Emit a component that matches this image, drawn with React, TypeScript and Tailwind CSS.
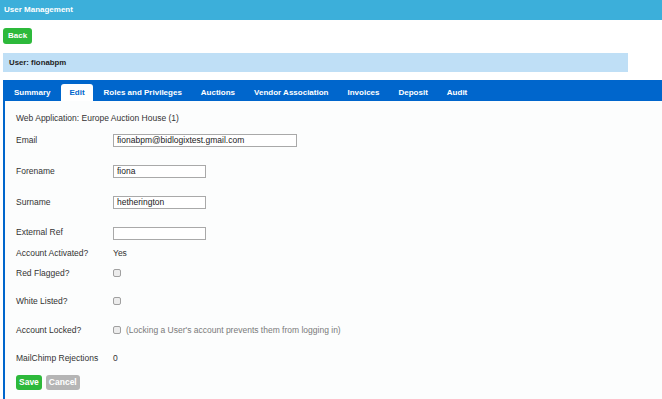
import React from 'react';

const tabs = ['Summary', 'Edit', 'Roles and Privileges', 'Auctions', 'Vendor Association', 'Invoices', 'Deposit', 'Audit'];

function Row({ label, children, mt }: { label: string; children?: React.ReactNode; mt: string }) {
  return (
    <div className={`flex items-center h-[20px] ${mt}`}>
      <div className="w-[97px] shrink-0 whitespace-nowrap">{label}</div>
      <div className="flex items-center">{children}</div>
    </div>
  );
}

function Checkbox() {
  return <span className="inline-block w-[8px] h-[8px] border border-[#a0a0a0] rounded-[2px] bg-[#ececec]" />;
}

const inputCls = 'h-[13px] border border-[#a9a9a9] bg-white px-[3px] text-[8.5px] text-[#222] outline-none';

export default function App() {
  return (
    <div className="w-[662px] h-[399px] overflow-hidden bg-white text-[#333] font-['Liberation_Sans',Arial,sans-serif] text-[8.5px]">
      <div className="h-[20px] bg-[#3cafda] flex items-center px-[4px] text-white font-bold text-[8px]">User Management</div>

      <div className="px-[3px] pt-[8px]">
        <button className="h-[16px] px-[5px] rounded-[3px] bg-[#2db93b] text-white font-bold text-[8px] leading-[16px]">Back</button>
      </div>

      <div className="ml-[3px] mt-[9px] w-[625px] h-[19px] bg-[#bfdff6] flex items-center px-[6px] font-bold text-[7.8px] text-[#222]">User: fionabpm</div>

      <div className="ml-[3px] mt-[8px] border-l-2 border-[#0066cc] h-[400px] bg-[#fcfdfd]">
        <div className="h-[21px] bg-[#0066cc] flex items-end pl-[1px]">
          {tabs.map((t) => (
            <div
              key={t}
              className={`h-[17px] px-[8px] mr-[3px] flex items-center font-bold text-[8px] rounded-t-[3px] ${t === 'Edit' ? 'bg-white text-[#0066cc]' : 'text-white'}`}
            >
              {t}
            </div>
          ))}
        </div>

        <div className="pl-[11px] pt-[7px]">
          <div className="h-[20px] flex items-center">Web Application: Europe Auction House (1)</div>
          <Row label="Email" mt="mt-[2px]">
            <input readOnly value="fionabpm@bidlogixtest.gmail.com" className={`w-[184px] ${inputCls}`} />
          </Row>
          <Row label="Forename" mt="mt-[11px]">
            <input readOnly value="fiona" className={`w-[93px] ${inputCls}`} />
          </Row>
          <Row label="Surname" mt="mt-[11px]">
            <input readOnly value="hetherington" className={`w-[93px] ${inputCls}`} />
          </Row>
          <Row label="External Ref" mt="mt-[10px]">
            <input readOnly value="" className={`w-[93px] ${inputCls} mt-[2px]`} />
          </Row>
          <Row label="Account Activated?" mt="mt-[1px]">
            <span>Yes</span>
          </Row>
          <Row label="Red Flagged?" mt="mt-0">
            <Checkbox />
          </Row>
          <Row label="White Listed?" mt="mt-[8px]">
            <Checkbox />
          </Row>
          <Row label="Account Locked?" mt="mt-[9px]">
            <Checkbox />
            <span className="ml-[5px] text-[#7a7a7a]">(Locking a User's account prevents them from logging in)</span>
          </Row>
          <Row label="MailChimp Rejections" mt="mt-[8px]">
            <span>0</span>
          </Row>
          <div className="flex gap-[4px] mt-[7px]">
            <button className="h-[15px] px-[3px] rounded-[3px] bg-[#2db93b] text-white font-bold text-[8.5px] leading-[15px]">Save</button>
            <button className="h-[15px] px-[3px] rounded-[3px] bg-[#b5b5b5] text-white font-bold text-[8.5px] leading-[15px]">Cancel</button>
          </div>
        </div>
      </div>
    </div>
  );
}
